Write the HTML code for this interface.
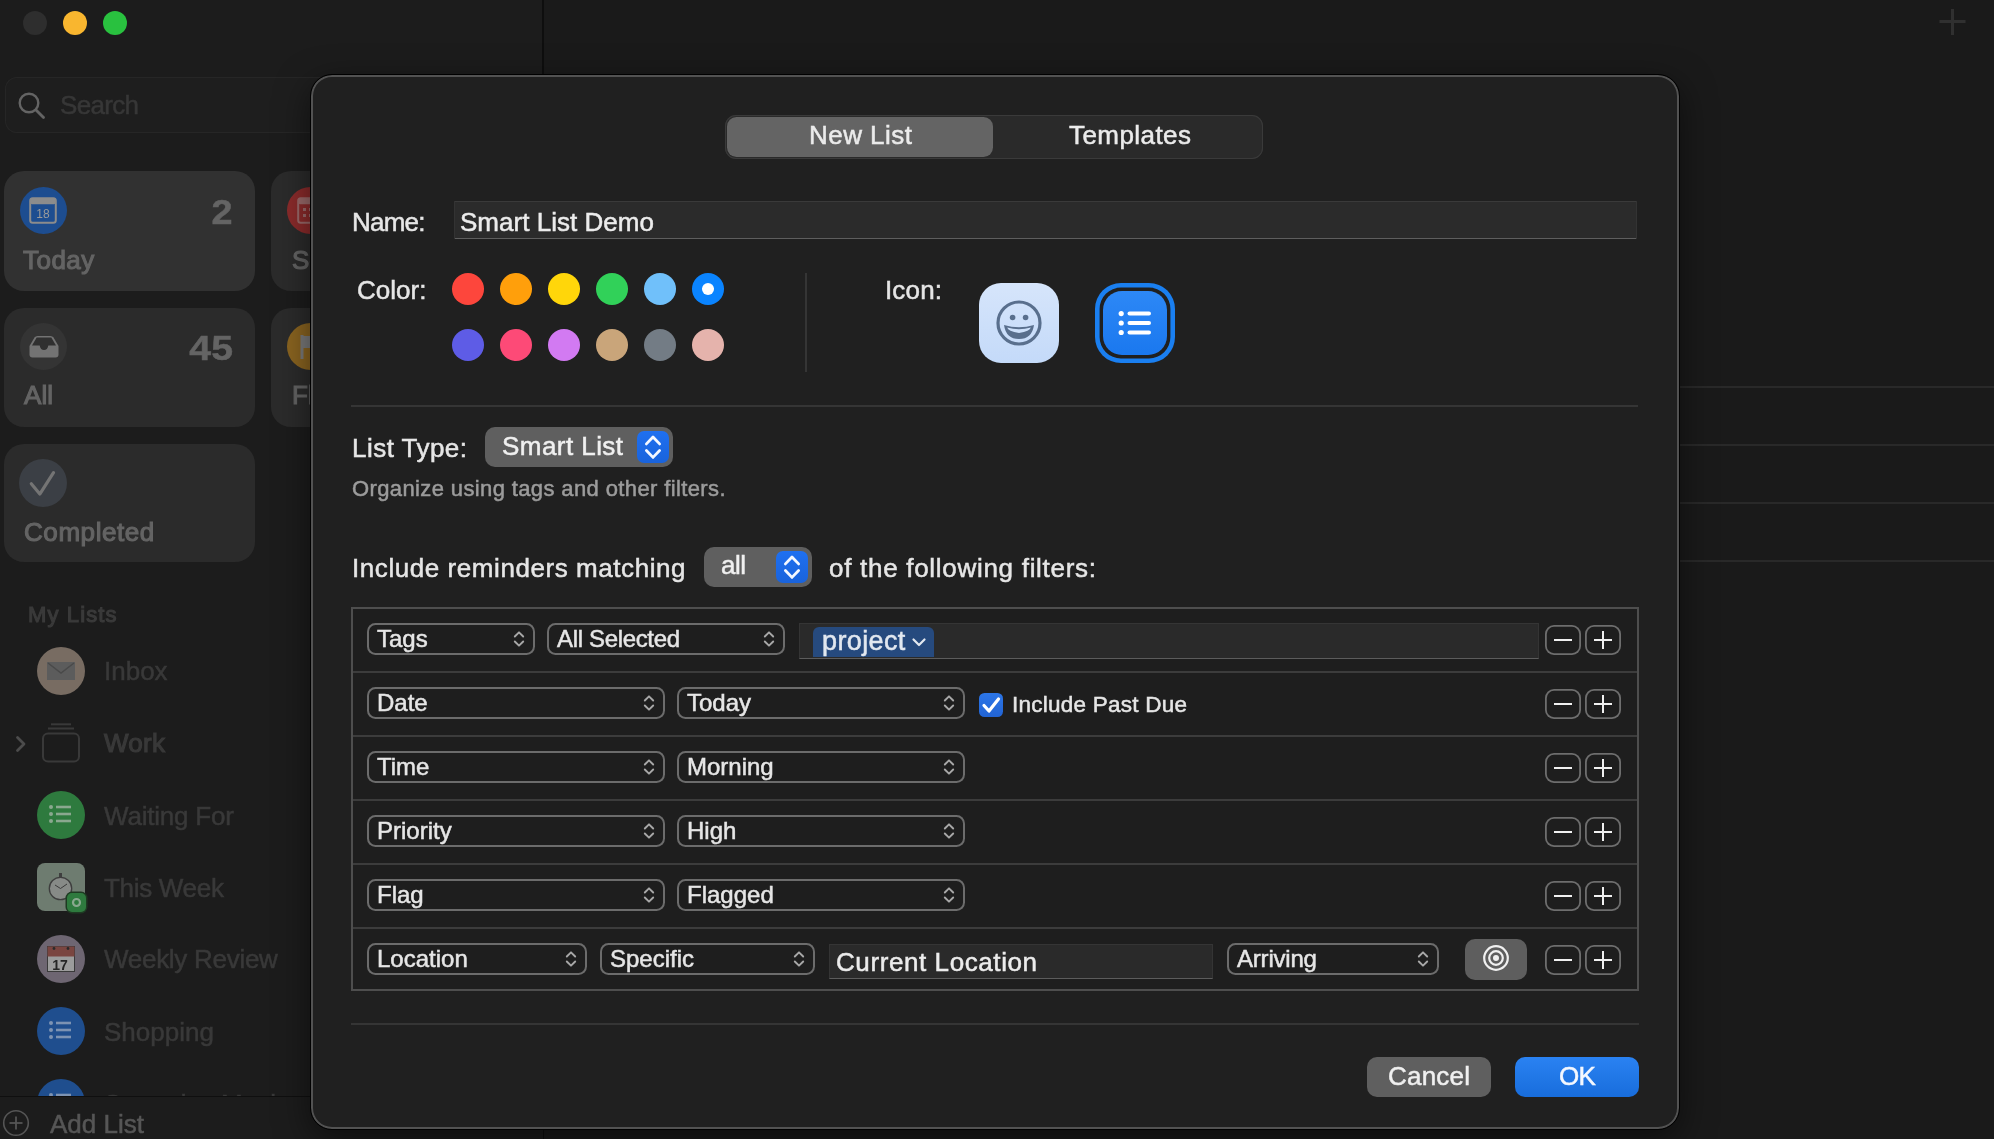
<!DOCTYPE html>
<html><head><meta charset="utf-8"><style>
html,body{margin:0;padding:0;width:1994px;height:1139px;overflow:hidden;background:#1a1a1a;}
body{position:relative;font-family:"Liberation Sans",sans-serif;}
.t{position:absolute;line-height:1;white-space:nowrap;-webkit-font-smoothing:antialiased;will-change:transform;-webkit-text-stroke-width:0.5px;}
.b{position:absolute;}
svg.b{overflow:visible;will-change:transform;}
</style></head><body>
<div class="b" style="left:0px;top:0px;width:543px;height:1139px;background:#1c1c1c;"></div>
<div class="b" style="left:543px;top:0px;width:1451px;height:1139px;background:#1a1a1a;"></div>
<div class="b" style="left:542px;top:0px;width:2px;height:1139px;background:#0e0e0e;"></div>
<div class="b" style="left:23px;top:11px;width:24px;height:24px;border-radius:50%;background:#2e2e2e;"></div>
<div class="b" style="left:63px;top:11px;width:24px;height:24px;border-radius:50%;background:#f9b62f;"></div>
<div class="b" style="left:103px;top:11px;width:24px;height:24px;border-radius:50%;background:#29c13f;"></div>
<div class="b" style="left:5px;top:77px;width:525px;height:56px;border-radius:12px;background:#1e1e1e;box-shadow:inset 0 0 0 1px #262626;"></div>
<svg class="b" style="left:16px;top:90px" width="34" height="34" viewBox="0 0 34 34"><circle cx="13" cy="13" r="9.3" fill="none" stroke="#646464" stroke-width="2.4"/><line x1="20" y1="20" x2="27.5" y2="27.5" stroke="#646464" stroke-width="2.8" stroke-linecap="round"/></svg>
<div class="t" style="left:60.00px;top:92.39px;font-size:26px;color:#373737;letter-spacing:-0.680px;">Search</div>
<div class="b" style="left:4px;top:171px;width:251px;height:120px;border-radius:20px;background:#313131;"></div>
<div class="b" style="left:271px;top:171px;width:251px;height:120px;border-radius:20px;background:#2b2b2b;"></div>
<div class="b" style="left:4px;top:308px;width:251px;height:119px;border-radius:20px;background:#2b2b2b;"></div>
<div class="b" style="left:271px;top:308px;width:251px;height:119px;border-radius:20px;background:#2b2b2b;"></div>
<div class="b" style="left:4px;top:444px;width:251px;height:118px;border-radius:20px;background:#2b2b2b;"></div>
<div class="b" style="left:20px;top:187px;width:47px;height:47px;border-radius:50%;background:#1d4d90;"></div>
<svg class="b" style="left:29px;top:197px" width="28" height="28" viewBox="0 0 28 28"><rect x="1.2" y="1.2" width="25.6" height="24.6" rx="2.5" fill="none" stroke="#8c8c8c" stroke-width="2"/><rect x="1.2" y="1.2" width="25.6" height="6" rx="2" fill="#8c8c8c"/><text x="14" y="21" font-size="12" text-anchor="middle" fill="#9a9a9a" font-family="Liberation Sans">18</text></svg>
<div class="t" style="left:213.20px;top:194.07px;font-size:35px;color:#646464;font-weight:bold;transform:scaleX(1.08);transform-origin:100% 50%;">2</div>
<div class="t" style="left:23.20px;top:246.69px;font-size:26px;color:#646464;letter-spacing:0.475px;-webkit-text-stroke-width:1.1px;">Today</div>
<div class="b" style="left:287px;top:187px;width:47px;height:47px;border-radius:50%;background:#8b2b2b;"></div>
<svg class="b" style="left:297px;top:197px" width="28" height="28" viewBox="0 0 28 28"><rect x="1.2" y="1.2" width="25.6" height="24.6" rx="2.5" fill="none" stroke="#9a6a6a" stroke-width="2"/><rect x="1.2" y="1.2" width="25.6" height="6" rx="2" fill="#9a6a6a"/><g fill="#9a6a6a"><rect x="6" y="11" width="3" height="3"/><rect x="12" y="11" width="3" height="3"/><rect x="6" y="17" width="3" height="3"/><rect x="12" y="17" width="3" height="3"/></g></svg>
<div class="t" style="left:291.50px;top:246.69px;font-size:26px;color:#646464;-webkit-text-stroke-width:1.1px;">Scheduled</div>
<div class="b" style="left:20px;top:323px;width:47px;height:47px;border-radius:50%;background:#343434;"></div>
<svg class="b" style="left:27.5px;top:335px" width="32" height="24" viewBox="0 0 32 24"><path d="M1.5 11 L6.5 2.5 Q7.5 1 9.5 1 H22.5 Q24.5 1 25.5 2.5 L30.5 11 V19.5 Q30.5 22.5 27.5 22.5 H4.5 Q1.5 22.5 1.5 19.5 Z" fill="#737373"/><path d="M4 10.5 L8.7 2.6 H23.3 L28 10.5 H20.3 Q19.5 15 16 15 Q12.5 15 11.7 10.5 Z" fill="#303030"/></svg>
<div class="t" style="left:194.10px;top:330.17px;font-size:35px;color:#646464;font-weight:bold;transform:scaleX(1.12);transform-origin:100% 50%;">45</div>
<div class="t" style="left:23.70px;top:381.79px;font-size:26px;color:#646464;letter-spacing:0.050px;-webkit-text-stroke-width:1.1px;">All</div>
<div class="b" style="left:287px;top:323px;width:47px;height:47px;border-radius:50%;background:#8a6420;"></div>
<svg class="b" style="left:298px;top:333px" width="28" height="28" viewBox="0 0 28 28"><path d="M4 2 V26" stroke="#7a7a7a" stroke-width="3"/><path d="M4 3 H22 L18 9 L22 15 H4 Z" fill="#7a7a7a"/></svg>
<div class="t" style="left:291.50px;top:381.79px;font-size:26px;color:#646464;-webkit-text-stroke-width:1.1px;">Flagged</div>
<div class="b" style="left:19px;top:459px;width:48px;height:48px;border-radius:50%;background:#3b3f45;"></div>
<svg class="b" style="left:29px;top:469px" width="28" height="28" viewBox="0 0 28 28"><path d="M2.3 14.7 L10.8 25.1 L24.5 3.6" fill="none" stroke="#747474" stroke-width="3.2" stroke-linecap="round" stroke-linejoin="round"/></svg>
<div class="t" style="left:23.70px;top:518.59px;font-size:26px;color:#646464;letter-spacing:0.575px;-webkit-text-stroke-width:1.1px;">Completed</div>
<div class="t" style="left:28.00px;top:604.38px;font-size:22px;color:#3a3a3a;letter-spacing:1.129px;-webkit-text-stroke-width:1.1px;">My Lists</div>
<div class="b" style="left:37px;top:647px;width:48px;height:48px;border-radius:50%;background:#786c62;"></div>
<div class="b" style="left:47px;top:662px;width:28px;height:18px;background:#5c5c5c;"></div>
<svg class="b" style="left:47px;top:662px" width="28" height="18" viewBox="0 0 28 18"><path d="M1 1 L14 11 L27 1" fill="none" stroke="#4a4a4a" stroke-width="1.5"/></svg>
<div class="t" style="left:104.20px;top:658.39px;font-size:26px;color:#393939;">Inbox</div>
<svg class="b" style="left:12px;top:733px" width="16" height="22" viewBox="0 0 16 22"><path d="M5.5 4.5 L12 11 L5.5 17.5" fill="none" stroke="#4c4c4c" stroke-width="2.8" stroke-linecap="round" stroke-linejoin="round"/></svg>
<svg class="b" style="left:40px;top:720px" width="42" height="44" viewBox="0 0 42 44"><rect x="3" y="13.5" width="36" height="28" rx="5" fill="none" stroke="#393939" stroke-width="2"/><line x1="8" y1="8.5" x2="34" y2="8.5" stroke="#393939" stroke-width="2"/><line x1="11" y1="4.3" x2="31" y2="4.3" stroke="#393939" stroke-width="2"/></svg>
<div class="t" style="left:104.20px;top:730.29px;font-size:26px;color:#393939;letter-spacing:0.233px;-webkit-text-stroke-width:1.1px;">Work</div>
<div class="b" style="left:37px;top:791px;width:48px;height:48px;border-radius:50%;background:#2e7a3e;"></div>
<svg class="b" style="left:47px;top:801px" width="28" height="28" viewBox="0 0 28 28"><g fill="#8aa88f"><circle cx="4" cy="6" r="2"/><circle cx="4" cy="13" r="2"/><circle cx="4" cy="20" r="2"/></g><g stroke="#8aa88f" stroke-width="2.6"><line x1="9" y1="6" x2="24" y2="6"/><line x1="9" y1="13" x2="24" y2="13"/><line x1="9" y1="20" x2="24" y2="20"/></g></svg>
<div class="t" style="left:104.20px;top:803.19px;font-size:26px;color:#393939;letter-spacing:-0.200px;">Waiting For</div>
<div class="b" style="left:37px;top:863px;width:48px;height:48px;border-radius:8px;background:#6e7c70;"></div>
<svg class="b" style="left:44px;top:870px" width="30" height="32" viewBox="0 0 30 32"><circle cx="16.5" cy="18.5" r="11.2" fill="#878a87" stroke="#3e3e3e" stroke-width="1.3"/><line x1="16.5" y1="18.5" x2="23" y2="14" stroke="#3a3a3a" stroke-width="1"/><line x1="16.5" y1="18.5" x2="11" y2="15" stroke="#3a3a3a" stroke-width="1"/><rect x="15" y="3" width="3" height="4.5" fill="#3e3e3e"/></svg>
<div class="b" style="left:67px;top:893px;width:19px;height:19px;border-radius:5px;background:#2e7a3e;box-shadow:0 0 0 1.5px #1e3a22;"></div>
<svg class="b" style="left:70px;top:896px" width="13" height="13" viewBox="0 0 13 13"><circle cx="6.5" cy="6.5" r="3.5" fill="none" stroke="#8aa88f" stroke-width="2.2"/></svg>
<div class="t" style="left:104.20px;top:874.69px;font-size:26px;color:#393939;letter-spacing:-0.300px;">This Week</div>
<div class="b" style="left:37px;top:935px;width:48px;height:48px;border-radius:50%;background:#6e6672;"></div>
<svg class="b" style="left:47px;top:945px" width="28" height="28" viewBox="0 0 28 28"><rect x="0.5" y="1.5" width="27" height="25" fill="#9c9c9c" stroke="#3a3a3a" stroke-width="1"/><rect x="0.5" y="1.5" width="27" height="10" fill="#7a4540"/><circle cx="7" cy="3.5" r="1.4" fill="#2a2a2a"/><circle cx="21" cy="3.5" r="1.4" fill="#2a2a2a"/><text x="13" y="24.5" font-size="14" font-weight="bold" fill="#252525" font-family="Liberation Sans" text-anchor="middle">17</text></svg>
<div class="t" style="left:104.20px;top:946.29px;font-size:26px;color:#393939;letter-spacing:-0.283px;">Weekly Review</div>
<div class="b" style="left:37px;top:1007px;width:48px;height:48px;border-radius:50%;background:#1f4e8e;"></div>
<svg class="b" style="left:47px;top:1017px" width="28" height="28" viewBox="0 0 28 28"><g fill="#7d93b3"><circle cx="4" cy="6" r="2"/><circle cx="4" cy="13" r="2"/><circle cx="4" cy="20" r="2"/></g><g stroke="#7d93b3" stroke-width="2.6"><line x1="9" y1="6" x2="24" y2="6"/><line x1="9" y1="13" x2="24" y2="13"/><line x1="9" y1="20" x2="24" y2="20"/></g></svg>
<div class="t" style="left:103.50px;top:1018.79px;font-size:26px;color:#393939;">Shopping</div>
<div class="b" style="left:37px;top:1079px;width:48px;height:48px;border-radius:50%;background:#1f4e8e;"></div>
<svg class="b" style="left:47px;top:1089px" width="28" height="28" viewBox="0 0 28 28"><g fill="#7d93b3"><circle cx="4" cy="6" r="2"/></g><g stroke="#7d93b3" stroke-width="2.6"><line x1="9" y1="6" x2="24" y2="6"/></g></svg>
<div class="t" style="left:104.20px;top:1090.79px;font-size:26px;color:#393939;">Someday Maybe</div>
<div class="b" style="left:0px;top:1096px;width:543px;height:43px;background:#1c1c1c;border-top:1px solid #0f0f0f;"></div>
<svg class="b" style="left:2px;top:1109px" width="28" height="28" viewBox="0 0 28 28"><circle cx="14" cy="14" r="12.3" fill="none" stroke="#555" stroke-width="1.6"/><line x1="14" y1="7.5" x2="14" y2="20.5" stroke="#555" stroke-width="1.8"/><line x1="7.5" y1="14" x2="20.5" y2="14" stroke="#555" stroke-width="1.8"/></svg>
<div class="t" style="left:49.80px;top:1110.99px;font-size:26px;color:#565656;letter-spacing:0.014px;">Add List</div>
<svg class="b" style="left:1937px;top:7px" width="30" height="30" viewBox="0 0 30 30"><line x1="15.5" y1="2" x2="15.5" y2="28" stroke="#303030" stroke-width="3"/><line x1="2.5" y1="14.5" x2="28.5" y2="14.5" stroke="#303030" stroke-width="3"/></svg>
<div class="b" style="left:560px;top:386px;width:1434px;height:2px;background:#292929;"></div>
<div class="b" style="left:560px;top:444px;width:1434px;height:2px;background:#292929;"></div>
<div class="b" style="left:560px;top:502px;width:1434px;height:2px;background:#292929;"></div>
<div class="b" style="left:560px;top:560px;width:1434px;height:2px;background:#292929;"></div>
<div class="b" style="left:310px;top:74px;width:1370px;height:1056px;border-radius:22px;background:#202020;border:1px solid #000;box-sizing:border-box;box-shadow:inset 0 0 0 2px #525252,0 10px 34px rgba(0,0,0,0.5);"></div>
<div class="b" style="left:725px;top:115px;width:538px;height:44px;border-radius:11px;background:#2a2a2a;box-shadow:inset 0 0 0 1px #3a3a3a;"></div>
<div class="b" style="left:727px;top:117px;width:266px;height:40px;border-radius:9.5px;background:#646464;"></div>
<div class="t" style="left:808.50px;top:122.39px;font-size:26px;color:#ebebeb;letter-spacing:0.471px;">New List</div>
<div class="t" style="left:1068.50px;top:122.39px;font-size:26px;color:#ebebeb;letter-spacing:0.438px;">Templates</div>
<div class="t" style="left:351.50px;top:208.79px;font-size:26px;color:#e6e6e6;letter-spacing:-0.775px;">Name:</div>
<div class="b" style="left:454px;top:201px;width:1183px;height:38px;background:#2b2b2b;border-top:1px solid #3a3a3a;border-bottom:1.5px solid #5e5e5e;box-sizing:border-box;"></div>
<div class="b" style="left:454px;top:201px;width:1px;height:38px;background:#333;"></div>
<div class="b" style="left:1636px;top:201px;width:1px;height:38px;background:#333;"></div>
<div class="t" style="left:460.00px;top:208.69px;font-size:26px;color:#ececec;letter-spacing:0.029px;">Smart List Demo</div>
<div class="t" style="left:356.50px;top:276.79px;font-size:26px;color:#e6e6e6;letter-spacing:0.020px;">Color:</div>
<div class="b" style="left:452px;top:273px;width:32px;height:32px;border-radius:50%;background:#fd463c;"></div>
<div class="b" style="left:500px;top:273px;width:32px;height:32px;border-radius:50%;background:#ff9f0b;"></div>
<div class="b" style="left:548px;top:273px;width:32px;height:32px;border-radius:50%;background:#ffd60a;"></div>
<div class="b" style="left:596px;top:273px;width:32px;height:32px;border-radius:50%;background:#31d159;"></div>
<div class="b" style="left:644px;top:273px;width:32px;height:32px;border-radius:50%;background:#70c0fa;"></div>
<div class="b" style="left:692px;top:273px;width:32px;height:32px;border-radius:50%;background:#0a84ff;"></div>
<div class="b" style="left:452px;top:329px;width:32px;height:32px;border-radius:50%;background:#5e5ce6;"></div>
<div class="b" style="left:500px;top:329px;width:32px;height:32px;border-radius:50%;background:#fd4a77;"></div>
<div class="b" style="left:548px;top:329px;width:32px;height:32px;border-radius:50%;background:#d27af2;"></div>
<div class="b" style="left:596px;top:329px;width:32px;height:32px;border-radius:50%;background:#c9a57a;"></div>
<div class="b" style="left:644px;top:329px;width:32px;height:32px;border-radius:50%;background:#737c85;"></div>
<div class="b" style="left:692px;top:329px;width:32px;height:32px;border-radius:50%;background:#e5b3ac;"></div>
<div class="b" style="left:702px;top:283px;width:12px;height:12px;border-radius:50%;background:#fff;"></div>
<div class="b" style="left:804.5px;top:273px;width:2.0px;height:99px;background:#353535;"></div>
<div class="t" style="left:885.00px;top:276.79px;font-size:26px;color:#e6e6e6;letter-spacing:0.150px;">Icon:</div>
<div class="b" style="left:979px;top:283px;width:80px;height:80px;border-radius:22px;background:linear-gradient(#d6e5fb,#c4daf9);"></div>
<svg class="b" style="left:979px;top:283px" width="80" height="80" viewBox="0 0 80 80"><circle cx="40" cy="40" r="21" fill="none" stroke="#596f8d" stroke-width="3.2"/><circle cx="33.6" cy="34.5" r="2.8" fill="#596f8d"/><circle cx="46.6" cy="34.5" r="2.8" fill="#596f8d"/><path d="M25 42 Q40 46.5 55 42 Q53 56 40 56 Q27 56 25 42 Z" fill="#596f8d"/><path d="M28.2 44.6 Q40 47.8 51.8 44.6 Q51 48.5 40 50 Q29 48.5 28.2 44.6 Z" fill="#cde0fa"/></svg>
<div class="b" style="left:1095px;top:283px;width:80px;height:80px;border-radius:26px;box-shadow:inset 0 0 0 4.6px #1a7ff0;"></div>
<div class="b" style="left:1103px;top:291px;width:64px;height:64px;border-radius:19px;background:linear-gradient(#2d88f6,#1a78ef);"></div>
<svg class="b" style="left:1103px;top:291px" width="64" height="64" viewBox="0 0 64 64"><g fill="#fff"><circle cx="18.2" cy="22.6" r="2.6"/><circle cx="18.2" cy="32" r="2.6"/><circle cx="18.2" cy="41.5" r="2.6"/></g><g stroke="#fff" stroke-width="4" stroke-linecap="round"><line x1="26.5" y1="22.6" x2="46" y2="22.6"/><line x1="26.5" y1="32" x2="46" y2="32"/><line x1="26.5" y1="41.5" x2="46" y2="41.5"/></g></svg>
<div class="b" style="left:351px;top:404.5px;width:1287px;height:2.0px;background:#353535;"></div>
<div class="t" style="left:352.00px;top:434.79px;font-size:26px;color:#e6e6e6;letter-spacing:0.467px;">List Type:</div>
<div class="b" style="left:485px;top:427px;width:188px;height:40px;border-radius:10px;background:#5f5f5f;"></div>
<div class="t" style="left:502.00px;top:433.29px;font-size:26px;color:#f0f0f0;letter-spacing:0.444px;">Smart List</div>
<div class="b" style="left:637px;top:431px;width:32px;height:32px;border-radius:7px;background:linear-gradient(#1f70f0,#1963dc);"></div>
<svg class="b" style="left:637px;top:431px" width="32" height="32" viewBox="0 0 32 32"><path d="M9.4 12.899999999999999 L16.0 6.0 L22.6 12.899999999999999 M9.4 19.5 L16.0 26.4 L22.6 19.5" fill="none" stroke="#f4f8ff" stroke-width="2.8" stroke-linecap="round" stroke-linejoin="round"/></svg>
<div class="t" style="left:351.60px;top:477.98px;font-size:22px;color:#9c9c9c;letter-spacing:0.378px;">Organize using tags and other filters.</div>
<div class="t" style="left:352.00px;top:554.79px;font-size:26px;color:#e6e6e6;letter-spacing:0.564px;">Include reminders matching</div>
<div class="b" style="left:704px;top:547px;width:108px;height:40px;border-radius:10px;background:#5f5f5f;"></div>
<div class="t" style="left:720.60px;top:551.79px;font-size:26px;color:#f0f0f0;letter-spacing:-0.500px;">all</div>
<div class="b" style="left:776px;top:551px;width:32px;height:32px;border-radius:7px;background:linear-gradient(#1f70f0,#1963dc);"></div>
<svg class="b" style="left:776px;top:551px" width="32" height="32" viewBox="0 0 32 32"><path d="M9.4 12.899999999999999 L16.0 6.0 L22.6 12.899999999999999 M9.4 19.5 L16.0 26.4 L22.6 19.5" fill="none" stroke="#f4f8ff" stroke-width="2.8" stroke-linecap="round" stroke-linejoin="round"/></svg>
<div class="t" style="left:829.00px;top:554.79px;font-size:26px;color:#e6e6e6;letter-spacing:0.708px;">of the following filters:</div>
<div class="b" style="left:351px;top:607px;width:1288px;height:384px;box-shadow:inset 0 0 0 2px #4e4e4e;background:#1e1e1e;"></div>
<div class="b" style="left:353px;top:671px;width:1284px;height:1.6000000000000227px;background:#3c3c3c;"></div>
<div class="b" style="left:353px;top:735px;width:1284px;height:1.6000000000000227px;background:#3c3c3c;"></div>
<div class="b" style="left:353px;top:799px;width:1284px;height:1.6000000000000227px;background:#3c3c3c;"></div>
<div class="b" style="left:353px;top:863px;width:1284px;height:1.6000000000000227px;background:#3c3c3c;"></div>
<div class="b" style="left:353px;top:927px;width:1284px;height:1.6000000000000227px;background:#3c3c3c;"></div>
<div class="b" style="left:367px;top:623.4px;width:167.5px;height:31.300000000000068px;border-radius:8.5px;box-shadow:inset 0 0 0 2px #6c6c6c;background:#1e1e1e;"></div>
<div class="t" style="left:377.10px;top:627.08px;font-size:24px;color:#e6e6e6;">Tags</div>
<svg class="b" style="left:510.5px;top:629px" width="16" height="20" viewBox="510.5 629 16 20"><path d="M514.3 636.5 L518.5 632.3336 L522.7 636.5 M514.3 641.5 L518.5 645.6664 L522.7 641.5" fill="none" stroke="#a8a8a8" stroke-width="1.9" stroke-linecap="round" stroke-linejoin="round"/></svg>
<div class="b" style="left:547px;top:623.4px;width:237.5px;height:31.300000000000068px;border-radius:8.5px;box-shadow:inset 0 0 0 2px #6c6c6c;background:#1e1e1e;"></div>
<div class="t" style="left:557.10px;top:627.08px;font-size:24px;color:#e6e6e6;letter-spacing:-0.336px;">All Selected</div>
<svg class="b" style="left:760.5px;top:629px" width="16" height="20" viewBox="760.5 629 16 20"><path d="M764.3 636.5 L768.5 632.3336 L772.7 636.5 M764.3 641.5 L768.5 645.6664 L772.7 641.5" fill="none" stroke="#a8a8a8" stroke-width="1.9" stroke-linecap="round" stroke-linejoin="round"/></svg>
<div class="b" style="left:799px;top:623px;width:740px;height:36px;background:#2a2a2a;border-top:1px solid #353535;border-bottom:1.5px solid #5c5c5c;border-left:1px solid #343434;border-right:1px solid #343434;box-sizing:border-box;"></div>
<div class="b" style="left:813px;top:627px;width:121px;height:30px;border-radius:6px 6px 0 0;background:#264a7e;"></div>
<div class="t" style="left:822.00px;top:628.44px;font-size:27px;color:#e2e8f0;letter-spacing:0.383px;">project</div>
<svg class="b" style="left:910px;top:634px" width="18" height="16" viewBox="0 0 18 16"><path d="M3.5 5.5 L9 11 L14.5 5.5" fill="none" stroke="#e2e8f0" stroke-width="2.2" stroke-linecap="round" stroke-linejoin="round"/></svg>
<div class="b" style="left:1545px;top:625px;width:36px;height:30px;border-radius:9px;box-shadow:inset 0 0 0 1.8px #6e6e6e;"></div>
<div class="b" style="left:1585px;top:625px;width:36px;height:30px;border-radius:9px;box-shadow:inset 0 0 0 1.8px #6e6e6e;"></div>
<div class="b" style="left:1554px;top:639.0px;width:18px;height:1.599999999999909px;background:#f0f0f0;"></div>
<div class="b" style="left:1594px;top:639.0px;width:18px;height:1.599999999999909px;background:#f0f0f0;"></div>
<div class="b" style="left:1602.2px;top:630.8px;width:1.599999999999909px;height:18.0px;background:#f0f0f0;"></div>
<div class="b" style="left:367px;top:687.4px;width:297.5px;height:31.300000000000068px;border-radius:8.5px;box-shadow:inset 0 0 0 2px #6c6c6c;background:#1e1e1e;"></div>
<div class="t" style="left:377.10px;top:691.08px;font-size:24px;color:#e6e6e6;">Date</div>
<svg class="b" style="left:640.5px;top:693px" width="16" height="20" viewBox="640.5 693 16 20"><path d="M644.3 700.5 L648.5 696.3336 L652.7 700.5 M644.3 705.5 L648.5 709.6664 L652.7 705.5" fill="none" stroke="#a8a8a8" stroke-width="1.9" stroke-linecap="round" stroke-linejoin="round"/></svg>
<div class="b" style="left:677px;top:687.4px;width:288px;height:31.300000000000068px;border-radius:8.5px;box-shadow:inset 0 0 0 2px #6c6c6c;background:#1e1e1e;"></div>
<div class="t" style="left:687.10px;top:691.08px;font-size:24px;color:#e6e6e6;">Today</div>
<svg class="b" style="left:941px;top:693px" width="16" height="20" viewBox="941 693 16 20"><path d="M944.8 700.5 L949 696.3336 L953.2 700.5 M944.8 705.5 L949 709.6664 L953.2 705.5" fill="none" stroke="#a8a8a8" stroke-width="1.9" stroke-linecap="round" stroke-linejoin="round"/></svg>
<div class="b" style="left:979px;top:692.5px;width:24px;height:24.5px;border-radius:5.5px;background:linear-gradient(#2c76e8,#2264d4);"></div>
<svg class="b" style="left:979px;top:692.5px" width="24" height="24" viewBox="0 0 24 24"><path d="M5 12.5 L10 18 L19.5 6" fill="none" stroke="#fff" stroke-width="3.2" stroke-linecap="round" stroke-linejoin="round"/></svg>
<div class="t" style="left:1011.50px;top:693.65px;font-size:22.5px;color:#e6e6e6;letter-spacing:0.240px;">Include Past Due</div>
<div class="b" style="left:1545px;top:689px;width:36px;height:30px;border-radius:9px;box-shadow:inset 0 0 0 1.8px #6e6e6e;"></div>
<div class="b" style="left:1585px;top:689px;width:36px;height:30px;border-radius:9px;box-shadow:inset 0 0 0 1.8px #6e6e6e;"></div>
<div class="b" style="left:1554px;top:703.0px;width:18px;height:1.599999999999909px;background:#f0f0f0;"></div>
<div class="b" style="left:1594px;top:703.0px;width:18px;height:1.599999999999909px;background:#f0f0f0;"></div>
<div class="b" style="left:1602.2px;top:694.8px;width:1.599999999999909px;height:18.0px;background:#f0f0f0;"></div>
<div class="b" style="left:367px;top:751.4px;width:297.5px;height:31.300000000000068px;border-radius:8.5px;box-shadow:inset 0 0 0 2px #6c6c6c;background:#1e1e1e;"></div>
<div class="t" style="left:377.10px;top:755.08px;font-size:24px;color:#e6e6e6;">Time</div>
<svg class="b" style="left:640.5px;top:757px" width="16" height="20" viewBox="640.5 757 16 20"><path d="M644.3 764.5 L648.5 760.3336 L652.7 764.5 M644.3 769.5 L648.5 773.6664 L652.7 769.5" fill="none" stroke="#a8a8a8" stroke-width="1.9" stroke-linecap="round" stroke-linejoin="round"/></svg>
<div class="b" style="left:677px;top:751.4px;width:288px;height:31.300000000000068px;border-radius:8.5px;box-shadow:inset 0 0 0 2px #6c6c6c;background:#1e1e1e;"></div>
<div class="t" style="left:687.10px;top:755.08px;font-size:24px;color:#e6e6e6;">Morning</div>
<svg class="b" style="left:941px;top:757px" width="16" height="20" viewBox="941 757 16 20"><path d="M944.8 764.5 L949 760.3336 L953.2 764.5 M944.8 769.5 L949 773.6664 L953.2 769.5" fill="none" stroke="#a8a8a8" stroke-width="1.9" stroke-linecap="round" stroke-linejoin="round"/></svg>
<div class="b" style="left:1545px;top:753px;width:36px;height:30px;border-radius:9px;box-shadow:inset 0 0 0 1.8px #6e6e6e;"></div>
<div class="b" style="left:1585px;top:753px;width:36px;height:30px;border-radius:9px;box-shadow:inset 0 0 0 1.8px #6e6e6e;"></div>
<div class="b" style="left:1554px;top:767.0px;width:18px;height:1.599999999999909px;background:#f0f0f0;"></div>
<div class="b" style="left:1594px;top:767.0px;width:18px;height:1.599999999999909px;background:#f0f0f0;"></div>
<div class="b" style="left:1602.2px;top:758.8px;width:1.599999999999909px;height:18.0px;background:#f0f0f0;"></div>
<div class="b" style="left:367px;top:815.4px;width:297.5px;height:31.300000000000068px;border-radius:8.5px;box-shadow:inset 0 0 0 2px #6c6c6c;background:#1e1e1e;"></div>
<div class="t" style="left:377.10px;top:819.08px;font-size:24px;color:#e6e6e6;">Priority</div>
<svg class="b" style="left:640.5px;top:821px" width="16" height="20" viewBox="640.5 821 16 20"><path d="M644.3 828.5 L648.5 824.3336 L652.7 828.5 M644.3 833.5 L648.5 837.6664 L652.7 833.5" fill="none" stroke="#a8a8a8" stroke-width="1.9" stroke-linecap="round" stroke-linejoin="round"/></svg>
<div class="b" style="left:677px;top:815.4px;width:288px;height:31.300000000000068px;border-radius:8.5px;box-shadow:inset 0 0 0 2px #6c6c6c;background:#1e1e1e;"></div>
<div class="t" style="left:687.10px;top:819.08px;font-size:24px;color:#e6e6e6;">High</div>
<svg class="b" style="left:941px;top:821px" width="16" height="20" viewBox="941 821 16 20"><path d="M944.8 828.5 L949 824.3336 L953.2 828.5 M944.8 833.5 L949 837.6664 L953.2 833.5" fill="none" stroke="#a8a8a8" stroke-width="1.9" stroke-linecap="round" stroke-linejoin="round"/></svg>
<div class="b" style="left:1545px;top:817px;width:36px;height:30px;border-radius:9px;box-shadow:inset 0 0 0 1.8px #6e6e6e;"></div>
<div class="b" style="left:1585px;top:817px;width:36px;height:30px;border-radius:9px;box-shadow:inset 0 0 0 1.8px #6e6e6e;"></div>
<div class="b" style="left:1554px;top:831.0px;width:18px;height:1.599999999999909px;background:#f0f0f0;"></div>
<div class="b" style="left:1594px;top:831.0px;width:18px;height:1.599999999999909px;background:#f0f0f0;"></div>
<div class="b" style="left:1602.2px;top:822.8px;width:1.599999999999909px;height:18.0px;background:#f0f0f0;"></div>
<div class="b" style="left:367px;top:879.4px;width:297.5px;height:31.300000000000068px;border-radius:8.5px;box-shadow:inset 0 0 0 2px #6c6c6c;background:#1e1e1e;"></div>
<div class="t" style="left:377.10px;top:883.08px;font-size:24px;color:#e6e6e6;">Flag</div>
<svg class="b" style="left:640.5px;top:885px" width="16" height="20" viewBox="640.5 885 16 20"><path d="M644.3 892.5 L648.5 888.3336 L652.7 892.5 M644.3 897.5 L648.5 901.6664 L652.7 897.5" fill="none" stroke="#a8a8a8" stroke-width="1.9" stroke-linecap="round" stroke-linejoin="round"/></svg>
<div class="b" style="left:677px;top:879.4px;width:288px;height:31.300000000000068px;border-radius:8.5px;box-shadow:inset 0 0 0 2px #6c6c6c;background:#1e1e1e;"></div>
<div class="t" style="left:687.10px;top:883.08px;font-size:24px;color:#e6e6e6;">Flagged</div>
<svg class="b" style="left:941px;top:885px" width="16" height="20" viewBox="941 885 16 20"><path d="M944.8 892.5 L949 888.3336 L953.2 892.5 M944.8 897.5 L949 901.6664 L953.2 897.5" fill="none" stroke="#a8a8a8" stroke-width="1.9" stroke-linecap="round" stroke-linejoin="round"/></svg>
<div class="b" style="left:1545px;top:881px;width:36px;height:30px;border-radius:9px;box-shadow:inset 0 0 0 1.8px #6e6e6e;"></div>
<div class="b" style="left:1585px;top:881px;width:36px;height:30px;border-radius:9px;box-shadow:inset 0 0 0 1.8px #6e6e6e;"></div>
<div class="b" style="left:1554px;top:895.0px;width:18px;height:1.599999999999909px;background:#f0f0f0;"></div>
<div class="b" style="left:1594px;top:895.0px;width:18px;height:1.599999999999909px;background:#f0f0f0;"></div>
<div class="b" style="left:1602.2px;top:886.8px;width:1.599999999999909px;height:18.0px;background:#f0f0f0;"></div>
<div class="b" style="left:367px;top:943.4px;width:219.5px;height:31.300000000000068px;border-radius:8.5px;box-shadow:inset 0 0 0 2px #6c6c6c;background:#1e1e1e;"></div>
<div class="t" style="left:377.10px;top:947.08px;font-size:24px;color:#e6e6e6;">Location</div>
<svg class="b" style="left:562.5px;top:949px" width="16" height="20" viewBox="562.5 949 16 20"><path d="M566.3 956.5 L570.5 952.3336 L574.7 956.5 M566.3 961.5 L570.5 965.6664 L574.7 961.5" fill="none" stroke="#a8a8a8" stroke-width="1.9" stroke-linecap="round" stroke-linejoin="round"/></svg>
<div class="b" style="left:599.5px;top:943.4px;width:215.0px;height:31.300000000000068px;border-radius:8.5px;box-shadow:inset 0 0 0 2px #6c6c6c;background:#1e1e1e;"></div>
<div class="t" style="left:609.60px;top:947.08px;font-size:24px;color:#e6e6e6;">Specific</div>
<svg class="b" style="left:790.5px;top:949px" width="16" height="20" viewBox="790.5 949 16 20"><path d="M794.3 956.5 L798.5 952.3336 L802.7 956.5 M794.3 961.5 L798.5 965.6664 L802.7 961.5" fill="none" stroke="#a8a8a8" stroke-width="1.9" stroke-linecap="round" stroke-linejoin="round"/></svg>
<div class="b" style="left:829px;top:943.5px;width:384px;height:35.5px;background:#2a2a2a;border-top:1px solid #353535;border-bottom:1.5px solid #5c5c5c;border-left:1px solid #343434;border-right:1px solid #343434;box-sizing:border-box;"></div>
<div class="t" style="left:836.00px;top:948.69px;font-size:26px;color:#ececec;letter-spacing:0.587px;">Current Location</div>
<div class="b" style="left:1227px;top:943.4px;width:211.5px;height:31.300000000000068px;border-radius:8.5px;box-shadow:inset 0 0 0 2px #6c6c6c;background:#1e1e1e;"></div>
<div class="t" style="left:1237.10px;top:947.08px;font-size:24px;color:#e6e6e6;letter-spacing:-0.200px;">Arriving</div>
<svg class="b" style="left:1414.5px;top:949px" width="16" height="20" viewBox="1414.5 949 16 20"><path d="M1418.3 956.5 L1422.5 952.3336 L1426.7 956.5 M1418.3 961.5 L1422.5 965.6664 L1426.7 961.5" fill="none" stroke="#a8a8a8" stroke-width="1.9" stroke-linecap="round" stroke-linejoin="round"/></svg>
<div class="b" style="left:1465px;top:939px;width:62px;height:40.5px;border-radius:10px;background:#5e5e5e;"></div>
<svg class="b" style="left:1480px;top:942px" width="32" height="32" viewBox="0 0 32 32"><circle cx="16" cy="16" r="11.8" fill="none" stroke="#f0f0f0" stroke-width="2.2"/><circle cx="16" cy="16" r="6.8" fill="none" stroke="#f0f0f0" stroke-width="2.2"/><circle cx="16" cy="16" r="3" fill="#f0f0f0"/></svg>
<div class="b" style="left:1545px;top:945px;width:36px;height:30px;border-radius:9px;box-shadow:inset 0 0 0 1.8px #6e6e6e;"></div>
<div class="b" style="left:1585px;top:945px;width:36px;height:30px;border-radius:9px;box-shadow:inset 0 0 0 1.8px #6e6e6e;"></div>
<div class="b" style="left:1554px;top:959.0px;width:18px;height:1.599999999999909px;background:#f0f0f0;"></div>
<div class="b" style="left:1594px;top:959.0px;width:18px;height:1.599999999999909px;background:#f0f0f0;"></div>
<div class="b" style="left:1602.2px;top:950.8px;width:1.599999999999909px;height:18.0px;background:#f0f0f0;"></div>
<div class="b" style="left:351px;top:1023px;width:1288px;height:2px;background:#353535;"></div>
<div class="b" style="left:1367px;top:1057px;width:124px;height:40px;border-radius:10px;background:#5f5f5f;"></div>
<div class="t" style="left:1388.00px;top:1062.79px;font-size:26px;color:#f0f0f0;letter-spacing:0.220px;">Cancel</div>
<div class="b" style="left:1515px;top:1057px;width:124px;height:40px;border-radius:10px;background:linear-gradient(#2a82f2,#186ddc);"></div>
<div class="t" style="left:1558.50px;top:1062.79px;font-size:26px;color:#f4f8ff;letter-spacing:-0.600px;">OK</div>
</body></html>
